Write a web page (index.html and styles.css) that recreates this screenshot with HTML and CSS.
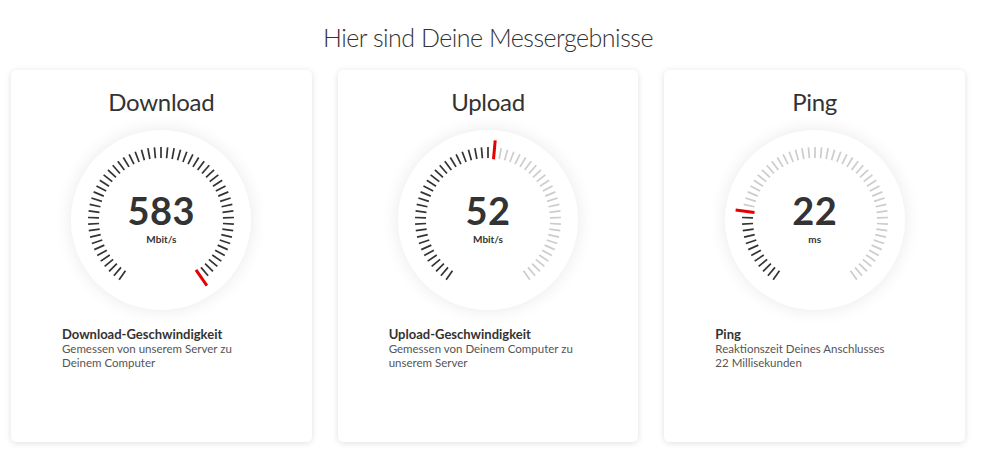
FILE: index.html
```
<html lang="de">

<head>
    <meta charset="UTF-8">
    <meta name="viewport" content="width=device-width, initial-scale=1.0">
    <title>Messergebnisse</title>
    <link rel="stylesheet" href="styles.css">
</head>

<body>
    <div class="page">
        <h1 class="page-title">Hier sind Deine Messergebnisse</h1>
        <div class="results">
            <div class="card">
                <h2 class="card-title">Download</h2>
                <div class="gauge" data-active="56">
                    <svg class="gauge-ticks" viewBox="-90 -90 180 180" width="180" height="180"></svg>
                    <div class="gauge-value">
                        <span class="gauge-number">583</span>
                        <span class="gauge-unit">Mbit/s</span>
                    </div>
                </div>
                <div class="info">
                    <h3>Download-Geschwindigkeit</h3>
                    <p>Gemessen von unserem Server zu Deinem Computer</p>
                </div>
            </div>
            <div class="card">
                <h2 class="card-title">Upload</h2>
                <div class="gauge" data-active="29">
                    <svg class="gauge-ticks" viewBox="-90 -90 180 180" width="180" height="180"></svg>
                    <div class="gauge-value">
                        <span class="gauge-number">52</span>
                        <span class="gauge-unit">Mbit/s</span>
                    </div>
                </div>
                <div class="info">
                    <h3>Upload-Geschwindigkeit</h3>
                    <p>Gemessen von Deinem Computer zu unserem Server</p>
                </div>
            </div>
            <div class="card">
                <h2 class="card-title">Ping</h2>
                <div class="gauge" data-active="12">
                    <svg class="gauge-ticks" viewBox="-90 -90 180 180" width="180" height="180"></svg>
                    <div class="gauge-value">
                        <span class="gauge-number">22</span>
                        <span class="gauge-unit">ms</span>
                    </div>
                </div>
                <div class="info">
                    <h3>Ping</h3>
                    <p>Reaktionszeit Deines Anschlusses<br>22 Millisekunden</p>
                </div>
            </div>
        </div>
    </div>
    <script>
        const TICKS = 57;
        const START = -145;
        const STEP = 290 / (TICKS - 1);
        const NS = 'http://www.w3.org/2000/svg';

        // Draw the tick marks of every gauge
        document.querySelectorAll('.gauge').forEach((gauge) => {
            const svg = gauge.querySelector('svg');
            const active = parseInt(gauge.dataset.active, 10);
            for (let i = 0; i < TICKS; i++) {
                const a = (START + i * STEP) * Math.PI / 180;
                const isActive = i === active;
                const r1 = isActive ? 61 : 62;
                const r2 = isActive ? 80 : 73;
                const line = document.createElementNS(NS, 'line');
                line.setAttribute('x1', (Math.sin(a) * r1).toFixed(2));
                line.setAttribute('y1', (-Math.cos(a) * r1).toFixed(2));
                line.setAttribute('x2', (Math.sin(a) * r2).toFixed(2));
                line.setAttribute('y2', (-Math.cos(a) * r2).toFixed(2));
                line.classList.add('tick');
                if (isActive) line.classList.add('tick-active');
                else if (i > active) line.classList.add('tick-rest');
                svg.appendChild(line);
            }
        });
    </script>
</body>

</html>
```

FILE: styles.css
```
/* Global Styles */
body {
    font-family: Lato, 'Noto Sans', sans-serif;
    margin: 0;
    padding: 0;
    background-color: #fff;
    color: #333;
}

.page {
    width: 954px;
    padding: 21px 0 0 11px;
}

/* Page Title */
.page-title {
    margin: 0 0 17px;
    font-size: 25px;
    line-height: 32px;
    font-weight: 300;
    letter-spacing: -0.5px;
    text-align: center;
    color: #333;
}

/* Result Cards */
.results {
    display: flex;
    gap: 26px;
}

.card {
    flex: 1;
    height: 372px;
    box-sizing: border-box;
    padding-top: 17px;
    background-color: #fff;
    border-radius: 5px;
    box-shadow: 0 1px 6px rgba(0, 0, 0, 0.13);
    display: flex;
    flex-direction: column;
    align-items: center;
}

.card-title {
    margin: 0;
    font-size: 24px;
    line-height: 30px;
    font-weight: 400;
    letter-spacing: -0.3px;
}

/* Gauge */
.gauge {
    display: grid;
    width: 180px;
    height: 180px;
    margin-top: 13px;
    border-radius: 50%;
    box-shadow: 0 0 18px rgba(0, 0, 0, 0.09);
}

.gauge-ticks,
.gauge-value {
    grid-area: 1 / 1;
}

.tick {
    stroke: #333;
    stroke-width: 1.7;
}

.tick-rest {
    stroke: #ccc;
}

.tick-active {
    stroke: #e60000;
    stroke-width: 3;
}

.gauge-value {
    display: flex;
    flex-direction: column;
    align-items: center;
    justify-content: center;
    padding-bottom: 8px;
}

.gauge-number {
    font-size: 38px;
    line-height: 46px;
    font-weight: 700;
    letter-spacing: 0.5px;
}

.gauge-unit {
    font-size: 10px;
    line-height: 12px;
    font-weight: 700;
}

/* Description */
.info {
    align-self: stretch;
    margin-top: 16px;
    padding: 0 40px 0 51px;
}

.info h3 {
    margin: 0;
    font-size: 13px;
    line-height: 16px;
    font-weight: 700;
}

.info p {
    margin: 0;
    font-size: 11.5px;
    line-height: 14px;
    color: #555;
}
```
